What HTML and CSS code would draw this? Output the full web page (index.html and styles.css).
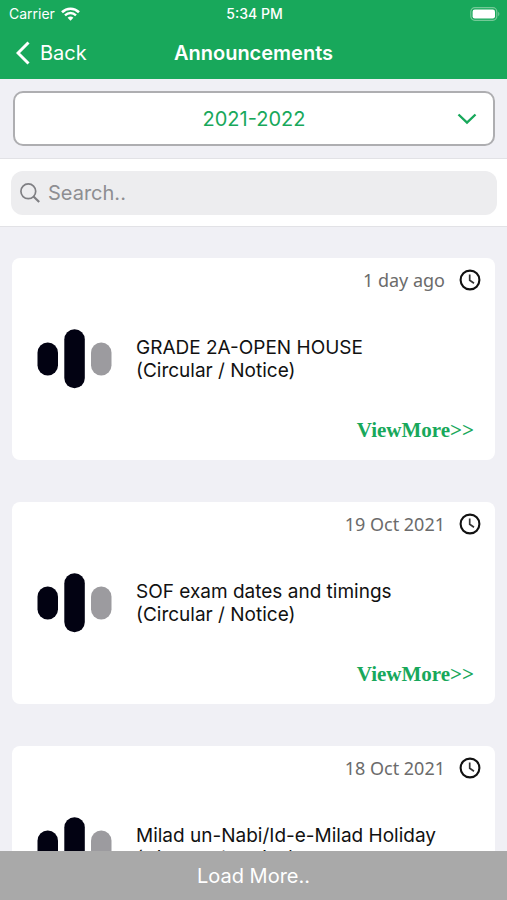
FILE: index.html
```html
<!DOCTYPE html>
<html lang="en">
<head>
<meta charset="utf-8">
<meta name="viewport" content="width=device-width, initial-scale=1">
<title>Announcements</title>
<link rel="stylesheet" href="styles.css">
</head>
<body>
<svg class="defs" aria-hidden="true">
  <symbol id="clock" viewBox="0 0 22 22">
    <circle cx="11" cy="11" r="9.4" fill="none" stroke="#111" stroke-width="2.1"/>
    <path d="M10.700 5.500v5.800l4.300 2.900" fill="none" stroke="#333" stroke-width="1.700"/>
  </symbol>
  <symbol id="bars" viewBox="0 0 75 60">
    <rect x="0.500" y="13.500" width="20.500" height="33" rx="10.200" fill="#020212"/>
    <rect x="27.300" y="0.300" width="20.500" height="59" rx="10.200" fill="#020212"/>
    <rect x="54" y="13.500" width="20.500" height="33" rx="10.200" fill="#9c9b9f"/>
  </symbol>
</svg>
<header class="header">
  <div class="status">
    <div class="carrier">
      <span>Carrier</span>
      <svg width="19" height="14" viewBox="0 0 19 14" aria-hidden="true">
        <path d="M1 5.200C5.800 .6 13.200 .6 18 5.200" fill="none" stroke="#fff" stroke-width="2.600"/>
        <path d="M4 8.300c3.200-3 7.800-3 11 0" fill="none" stroke="#fff" stroke-width="2.400"/>
        <path d="M6.600 10.700c1.700-1.500 4.100-1.500 5.800 0L9.500 13.700z" fill="#fff"/>
      </svg>
    </div>
    <span class="time">5:34 PM</span>
    <svg class="battery" width="30" height="14" viewBox="0 0 30 14" aria-hidden="true">
      <rect x=".8" y=".7" width="26" height="12.600" rx="4" fill="none" stroke="#74c997" stroke-width="1.200"/>
      <rect x="2.600" y="2.500" width="22.400" height="9" rx="2.200" fill="#fff"/>
      <path d="M28.200 4.800c1.600.8 1.600 3.600 0 4.400z" fill="#74c997"/>
    </svg>
  </div>
  <nav class="nav">
    <a class="back" href="#">
      <svg width="14" height="24" viewBox="0 0 14 24" aria-hidden="true"><path d="M12.500 1.500 2 12l10.500 10.500" fill="none" stroke="#fff" stroke-width="3"/></svg>
      <span>Back</span>
    </a>
    <h1>Announcements</h1>
  </nav>
</header>
<div class="year">
  <select aria-label="Academic year"><option>2021-2022</option></select>
  <svg class="chevron" width="20" height="12" viewBox="0 0 20 12" aria-hidden="true"><path d="M1.500 1.500 10 9.500l8.500-8" fill="none" stroke="#18a85b" stroke-width="2.400"/></svg>
</div>
<div class="search">
  <label class="field">
    <svg width="20" height="20" viewBox="0 0 20 20" aria-hidden="true"><circle cx="8.300" cy="8.300" r="7.400" fill="none" stroke="#7f7f83" stroke-width="1.700"/><path d="m13.500 13.500 5.700 5.500" stroke="#7f7f83" stroke-width="2.200"/></svg>
    <input type="search" placeholder="Search.." aria-label="Search">
  </label>
</div>
<main class="list">
  <article class="card">
    <div class="date"><time>1 day ago</time><svg width="22" height="22" aria-hidden="true"><use href="#clock"/></svg></div>
    <div class="body"><svg width="75" height="60" aria-hidden="true"><use href="#bars"/></svg><h2>GRADE 2A-OPEN HOUSE<br>(Circular / Notice)</h2></div>
    <a class="more" href="#">ViewMore&gt;&gt;</a>
  </article>
  <article class="card">
    <div class="date"><time>19 Oct 2021</time><svg width="22" height="22" aria-hidden="true"><use href="#clock"/></svg></div>
    <div class="body"><svg width="75" height="60" aria-hidden="true"><use href="#bars"/></svg><h2>SOF exam dates and timings<br>(Circular / Notice)</h2></div>
    <a class="more" href="#">ViewMore&gt;&gt;</a>
  </article>
  <article class="card">
    <div class="date"><time>18 Oct 2021</time><svg width="22" height="22" aria-hidden="true"><use href="#clock"/></svg></div>
    <div class="body"><svg width="75" height="60" aria-hidden="true"><use href="#bars"/></svg><h2>Milad un-Nabi/Id-e-Milad Holiday<br>(Circular / Notice)</h2></div>
    <a class="more" href="#">ViewMore&gt;&gt;</a>
  </article>
</main>
<button class="load" type="button">Load More..</button>
</body>
</html>
```
FILE: styles.css
```css
* { box-sizing: border-box; }

body {
  margin: 0;
  height: 100vh;
  display: flex;
  flex-direction: column;
  overflow: hidden;
  background: #f0f0f5;
  color: #111;
  font-family: Inter, "Liberation Sans", sans-serif;
}

svg { display: block; flex: none; }
.defs { position: absolute; width: 0; height: 0; }
a { text-decoration: none; }

.header { flex: none; background: #18a85b; color: #fff; }

.status {
  display: grid;
  grid-template-columns: 1fr auto 1fr;
  align-items: center;
  height: 27px;
  padding: 0 7px 0 9px;
  font-size: 14px;
}
.carrier { display: flex; align-items: center; gap: 6px; }
.time { font-weight: 500; }
.battery { justify-self: end; }

.nav {
  display: grid;
  grid-template-columns: 1fr auto 1fr;
  align-items: center;
  height: 52px;
  padding: 0 16px;
}
.back { display: flex; align-items: center; gap: 10px; color: #fff; font-size: 20px; }
h1 { margin: 0; font-size: 20px; font-weight: 600; }

.year { flex: none; position: relative; padding: 12px 12px 12px 13px; }
.year select {
  display: block;
  width: 100%;
  height: 55px;
  padding: 0;
  border: 2px solid #aeaeb1;
  border-radius: 10px;
  background: #fff;
  color: #18a85b;
  font: 20px Inter, sans-serif;
  text-align: center;
  text-align-last: center;
  appearance: none;
}
.chevron { position: absolute; right: 30px; top: 34px; pointer-events: none; }

.search {
  flex: none;
  padding: 12px 10px 11px 11px;
  background: #fff;
  border-top: 1px solid #e2e2e6;
  border-bottom: 1px solid #e2e2e6;
}
.field {
  display: flex;
  align-items: center;
  gap: 8px;
  height: 44px;
  padding: 0 9px;
  border-radius: 12px;
  background: #ededef;
}
.field input {
  flex: 1;
  min-width: 0;
  padding: 0;
  border: 0;
  outline: 0;
  background: none;
  font: 20px Inter, sans-serif;
}
.field input::placeholder { color: #8e8e92; }

.list {
  flex: 1;
  min-height: 0;
  overflow: hidden;
  display: flex;
  flex-direction: column;
  gap: 42px;
  padding: 31px 12px 0;
}
.card {
  flex: none;
  display: grid;
  grid-template-rows: 60px 1fr 60px;
  min-height: 202px;
  padding: 0 14px 0 25px;
  border-radius: 8px;
  background: #fff;
}
.date {
  display: flex;
  align-items: center;
  justify-content: flex-end;
  align-self: start;
  gap: 14px;
  height: 44px;
  color: #6b6b6b;
  font: 18px "Noto Sans", sans-serif;
}
.body { display: flex; align-items: center; gap: 24px; }
h2 { margin: 0; font-size: 19px; line-height: 23px; font-weight: 400; }
.more {
  justify-self: end;
  align-self: center;
  padding-right: 7px;
  color: #18a85b;
  font: bold 21px "Liberation Serif", serif;
}

.load {
  flex: none;
  height: 49px;
  border: 0;
  background: #a9a9a9;
  color: #fff;
  font: 20px Inter, sans-serif;
}
```
